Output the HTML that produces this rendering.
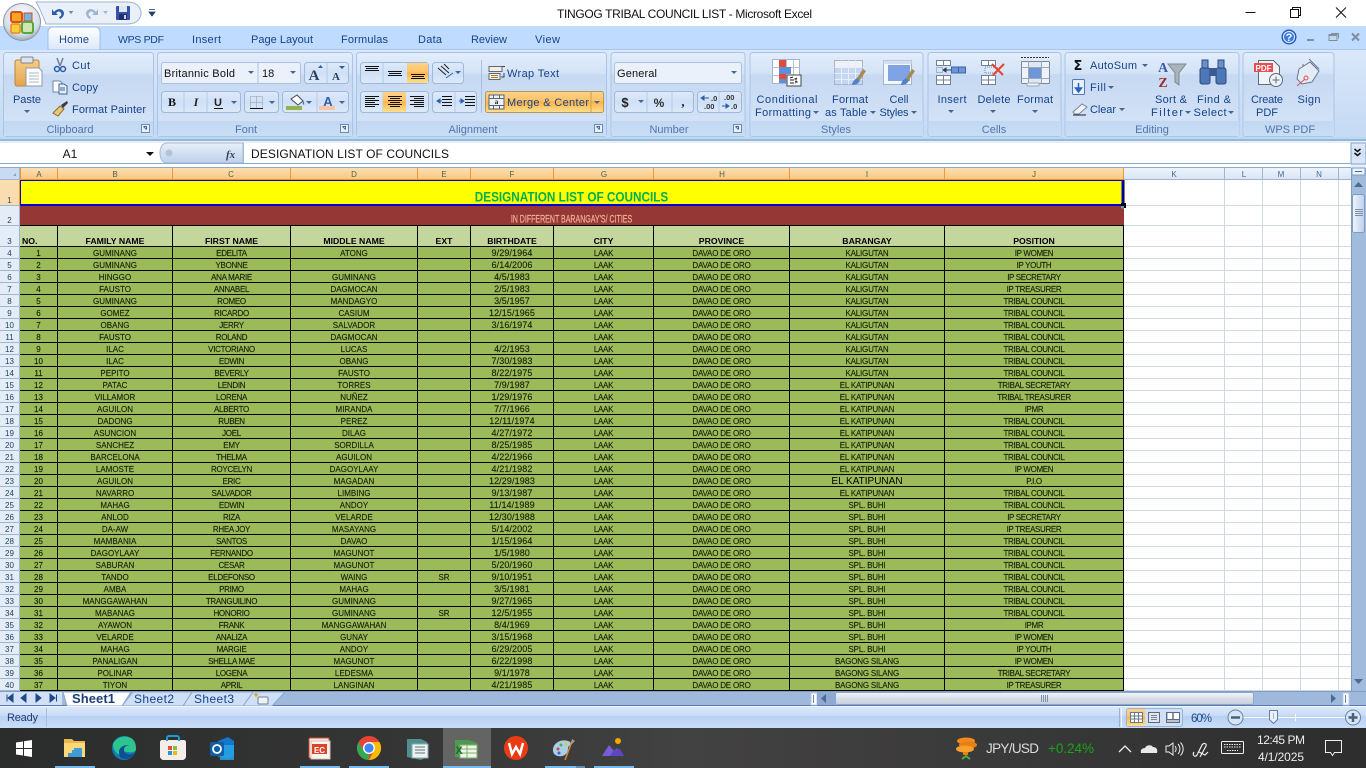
<!DOCTYPE html>
<html><head><meta charset="utf-8"><title>TINGOG TRIBAL COUNCIL LIST - Microsoft Excel</title>
<style>
html,body{margin:0;padding:0;width:1366px;height:768px;overflow:hidden;background:#fff;font-family:"Liberation Sans",sans-serif}
#sheet{position:absolute;left:0;top:180px;width:1124px;height:511px;overflow:hidden}
table{border-collapse:separate;border-spacing:0;table-layout:fixed;width:1124px}
td,th{box-sizing:border-box;padding:2px 0 0;overflow:hidden;white-space:nowrap;text-align:center;font-size:8px;line-height:9px;font-weight:normal}
td{background:#9bbb59;color:#18220a;-webkit-text-stroke:.15px #18220a;border-right:1px solid #000;border-bottom:1px solid #000}
th{background:#e4ecf7;color:#24415f;border-right:1px solid #9eb6ce;border-bottom:1px solid #9eb6ce}
tr{height:12px}
.h td{background:#c3d69b;color:#000;-webkit-text-stroke:0;font-weight:bold;font-size:8.7px;vertical-align:bottom;line-height:9px}
.h th{vertical-align:bottom;line-height:9px}
.d td:nth-child(4){letter-spacing:-.3px}
.d td:nth-child(7){font-size:9px;letter-spacing:.1px}
.d td:nth-child(8){letter-spacing:-.3px}
.d td:nth-child(9){letter-spacing:-.2px}
.d td:nth-child(10){letter-spacing:-.2px}
.d td:nth-child(11){letter-spacing:-.35px}
#right{position:absolute;left:1124px;top:180px;width:227px;height:511px;background:#fff;overflow:hidden;
background-image:linear-gradient(#d0d7e5,#d0d7e5),linear-gradient(#d0d7e5,#d0d7e5),linear-gradient(#d0d7e5,#d0d7e5),repeating-linear-gradient(to bottom,transparent 0,transparent 11px,#d0d7e5 11px,#d0d7e5 12px);
background-size:100% 1px,100% 1px,100% 1px,100% 444px;background-position:0 25px,0 45px,0 66px,0 67px;background-repeat:no-repeat}
#right i{position:absolute;top:0;width:1px;height:511px;background:#d0d7e5}
svg{position:absolute;left:0;top:0}
svg text{font-family:"Liberation Sans",sans-serif;font-size:11px;fill:#15428b}
.g{fill:#4f76ad;text-anchor:middle}
.m{text-anchor:middle}
.k{fill:#111}
.c{font-size:8px;text-anchor:middle;fill:#4d5f4a}
</style></head><body>
<div id="right"><i style="left:100px"></i><i style="left:138px"></i><i style="left:176px"></i><i style="left:214px"></i></div>
<div id="sheet"><table>
<colgroup><col style="width:20px"><col style="width:38px"><col style="width:115px"><col style="width:118px"><col style="width:127px"><col style="width:53px"><col style="width:83px"><col style="width:100px"><col style="width:136px"><col style="width:155px"><col style="width:179px"></colgroup>
<tr style="height:26px"><th style="background:#f9dcb0;border-right-color:#f29536;vertical-align:bottom;color:#3b4a55;line-height:9px">1</th><td colspan="10" style="background:#ff0;border:0"></td></tr>
<tr style="height:20px"><th style="vertical-align:bottom;line-height:9px">2</th><td colspan="10" style="background:#953735;border-right:0"></td></tr>
<tr class="h" style="height:21px"><th>3</th><td style="text-align:left;padding-left:2px">NO.</td><td>FAMILY NAME</td><td>FIRST NAME</td><td>MIDDLE NAME</td><td>EXT</td><td>BIRTHDATE</td><td>CITY</td><td>PROVINCE</td><td>BARANGAY</td><td>POSITION</td></tr>
<tr class="d"><th>4</th><td>1</td><td>GUMINANG</td><td>EDELITA</td><td>ATONG</td><td></td><td>9/29/1964</td><td>LAAK</td><td>DAVAO DE ORO</td><td>KALIGUTAN</td><td>IP WOMEN</td></tr>
<tr class="d"><th>5</th><td>2</td><td>GUMINANG</td><td>YBONNE</td><td></td><td></td><td>6/14/2006</td><td>LAAK</td><td>DAVAO DE ORO</td><td>KALIGUTAN</td><td>IP YOUTH</td></tr>
<tr class="d"><th>6</th><td>3</td><td>HINGGO</td><td>ANA MARIE</td><td>GUMINANG</td><td></td><td>4/5/1983</td><td>LAAK</td><td>DAVAO DE ORO</td><td>KALIGUTAN</td><td>IP SECRETARY</td></tr>
<tr class="d"><th>7</th><td>4</td><td>FAUSTO</td><td>ANNABEL</td><td>DAGMOCAN</td><td></td><td>2/5/1983</td><td>LAAK</td><td>DAVAO DE ORO</td><td>KALIGUTAN</td><td>IP TREASURER</td></tr>
<tr class="d"><th>8</th><td>5</td><td>GUMINANG</td><td>ROMEO</td><td>MANDAGYO</td><td></td><td>3/5/1957</td><td>LAAK</td><td>DAVAO DE ORO</td><td>KALIGUTAN</td><td>TRIBAL COUNCIL</td></tr>
<tr class="d"><th>9</th><td>6</td><td>GOMEZ</td><td>RICARDO</td><td>CASIUM</td><td></td><td>12/15/1965</td><td>LAAK</td><td>DAVAO DE ORO</td><td>KALIGUTAN</td><td>TRIBAL COUNCIL</td></tr>
<tr class="d"><th>10</th><td>7</td><td>OBANG</td><td>JERRY</td><td>SALVADOR</td><td></td><td>3/16/1974</td><td>LAAK</td><td>DAVAO DE ORO</td><td>KALIGUTAN</td><td>TRIBAL COUNCIL</td></tr>
<tr class="d"><th>11</th><td>8</td><td>FAUSTO</td><td>ROLAND</td><td>DAGMOCAN</td><td></td><td></td><td>LAAK</td><td>DAVAO DE ORO</td><td>KALIGUTAN</td><td>TRIBAL COUNCIL</td></tr>
<tr class="d"><th>12</th><td>9</td><td>ILAC</td><td>VICTORIANO</td><td>LUCAS</td><td></td><td>4/2/1953</td><td>LAAK</td><td>DAVAO DE ORO</td><td>KALIGUTAN</td><td>TRIBAL COUNCIL</td></tr>
<tr class="d"><th>13</th><td>10</td><td>ILAC</td><td>EDWIN</td><td>OBANG</td><td></td><td>7/30/1983</td><td>LAAK</td><td>DAVAO DE ORO</td><td>KALIGUTAN</td><td>TRIBAL COUNCIL</td></tr>
<tr class="d"><th>14</th><td>11</td><td>PEPITO</td><td>BEVERLY</td><td>FAUSTO</td><td></td><td>8/22/1975</td><td>LAAK</td><td>DAVAO DE ORO</td><td>KALIGUTAN</td><td>TRIBAL COUNCIL</td></tr>
<tr class="d"><th>15</th><td>12</td><td>PATAC</td><td>LENDIN</td><td>TORRES</td><td></td><td>7/9/1987</td><td>LAAK</td><td>DAVAO DE ORO</td><td>EL KATIPUNAN</td><td>TRIBAL SECRETARY</td></tr>
<tr class="d"><th>16</th><td>13</td><td>VILLAMOR</td><td>LORENA</td><td>NUÑEZ</td><td></td><td>1/29/1976</td><td>LAAK</td><td>DAVAO DE ORO</td><td>EL KATIPUNAN</td><td>TRIBAL TREASURER</td></tr>
<tr class="d"><th>17</th><td>14</td><td>AGUILON</td><td>ALBERTO</td><td>MIRANDA</td><td></td><td>7/7/1966</td><td>LAAK</td><td>DAVAO DE ORO</td><td>EL KATIPUNAN</td><td>IPMR</td></tr>
<tr class="d"><th>18</th><td>15</td><td>DADONG</td><td>RUBEN</td><td>PEREZ</td><td></td><td>12/11/1974</td><td>LAAK</td><td>DAVAO DE ORO</td><td>EL KATIPUNAN</td><td>TRIBAL COUNCIL</td></tr>
<tr class="d"><th>19</th><td>16</td><td>ASUNCION</td><td>JOEL</td><td>DILAG</td><td></td><td>4/27/1972</td><td>LAAK</td><td>DAVAO DE ORO</td><td>EL KATIPUNAN</td><td>TRIBAL COUNCIL</td></tr>
<tr class="d"><th>20</th><td>17</td><td>SANCHEZ</td><td>EMY</td><td>SORDILLA</td><td></td><td>8/25/1985</td><td>LAAK</td><td>DAVAO DE ORO</td><td>EL KATIPUNAN</td><td>TRIBAL COUNCIL</td></tr>
<tr class="d"><th>21</th><td>18</td><td>BARCELONA</td><td>THELMA</td><td>AGUILON</td><td></td><td>4/22/1966</td><td>LAAK</td><td>DAVAO DE ORO</td><td>EL KATIPUNAN</td><td>TRIBAL COUNCIL</td></tr>
<tr class="d"><th>22</th><td>19</td><td>LAMOSTE</td><td>ROYCELYN</td><td>DAGOYLAAY</td><td></td><td>4/21/1982</td><td>LAAK</td><td>DAVAO DE ORO</td><td>EL KATIPUNAN</td><td>IP WOMEN</td></tr>
<tr class="d"><th>23</th><td>20</td><td>AGUILON</td><td>ERIC</td><td>MAGADAN</td><td></td><td>12/29/1983</td><td>LAAK</td><td>DAVAO DE ORO</td><td style="font-size:10px;color:#000;-webkit-text-stroke:0;letter-spacing:0">EL KATIPUNAN</td><td>P.I.O</td></tr>
<tr class="d"><th>24</th><td>21</td><td>NAVARRO</td><td>SALVADOR</td><td>LIMBING</td><td></td><td>9/13/1987</td><td>LAAK</td><td>DAVAO DE ORO</td><td>EL KATIPUNAN</td><td>TRIBAL COUNCIL</td></tr>
<tr class="d"><th>25</th><td>22</td><td>MAHAG</td><td>EDWIN</td><td>ANDOY</td><td></td><td>11/14/1989</td><td>LAAK</td><td>DAVAO DE ORO</td><td>SPL. BUHI</td><td>TRIBAL COUNCIL</td></tr>
<tr class="d"><th>26</th><td>23</td><td>ANLOD</td><td>RIZA</td><td>VELARDE</td><td></td><td>12/30/1988</td><td>LAAK</td><td>DAVAO DE ORO</td><td>SPL. BUHI</td><td>IP SECRETARY</td></tr>
<tr class="d"><th>27</th><td>24</td><td>DA-AW</td><td>RHEA JOY</td><td>MASAYANG</td><td></td><td>5/14/2002</td><td>LAAK</td><td>DAVAO DE ORO</td><td>SPL. BUHI</td><td>IP TREASURER</td></tr>
<tr class="d"><th>28</th><td>25</td><td>MAMBANIA</td><td>SANTOS</td><td>DAVAO</td><td></td><td>1/15/1964</td><td>LAAK</td><td>DAVAO DE ORO</td><td>SPL. BUHI</td><td>TRIBAL COUNCIL</td></tr>
<tr class="d"><th>29</th><td>26</td><td>DAGOYLAAY</td><td>FERNANDO</td><td>MAGUNOT</td><td></td><td>1/5/1980</td><td>LAAK</td><td>DAVAO DE ORO</td><td>SPL. BUHI</td><td>TRIBAL COUNCIL</td></tr>
<tr class="d"><th>30</th><td>27</td><td>SABURAN</td><td>CESAR</td><td>MAGUNOT</td><td></td><td>5/20/1960</td><td>LAAK</td><td>DAVAO DE ORO</td><td>SPL. BUHI</td><td>TRIBAL COUNCIL</td></tr>
<tr class="d"><th>31</th><td>28</td><td>TANDO</td><td>ELDEFONSO</td><td>WAING</td><td>SR</td><td>9/10/1951</td><td>LAAK</td><td>DAVAO DE ORO</td><td>SPL. BUHI</td><td>TRIBAL COUNCIL</td></tr>
<tr class="d"><th>32</th><td>29</td><td>AMBA</td><td>PRIMO</td><td>MAHAG</td><td></td><td>3/5/1981</td><td>LAAK</td><td>DAVAO DE ORO</td><td>SPL. BUHI</td><td>TRIBAL COUNCIL</td></tr>
<tr class="d"><th>33</th><td>30</td><td>MANGGAWAHAN</td><td>TRANGUILINO</td><td>GUMINANG</td><td></td><td>9/27/1965</td><td>LAAK</td><td>DAVAO DE ORO</td><td>SPL. BUHI</td><td>TRIBAL COUNCIL</td></tr>
<tr class="d"><th>34</th><td>31</td><td>MABANAG</td><td>HONORIO</td><td>GUMINANG</td><td>SR</td><td>12/5/1955</td><td>LAAK</td><td>DAVAO DE ORO</td><td>SPL. BUHI</td><td>TRIBAL COUNCIL</td></tr>
<tr class="d"><th>35</th><td>32</td><td>AYAWON</td><td>FRANK</td><td>MANGGAWAHAN</td><td></td><td>8/4/1969</td><td>LAAK</td><td>DAVAO DE ORO</td><td>SPL. BUHI</td><td>IPMR</td></tr>
<tr class="d"><th>36</th><td>33</td><td>VELARDE</td><td>ANALIZA</td><td>GUNAY</td><td></td><td>3/15/1968</td><td>LAAK</td><td>DAVAO DE ORO</td><td>SPL. BUHI</td><td>IP WOMEN</td></tr>
<tr class="d"><th>37</th><td>34</td><td>MAHAG</td><td>MARGIE</td><td>ANDOY</td><td></td><td>6/29/2005</td><td>LAAK</td><td>DAVAO DE ORO</td><td>SPL. BUHI</td><td>IP YOUTH</td></tr>
<tr class="d"><th>38</th><td>35</td><td>PANALIGAN</td><td>SHELLA MAE</td><td>MAGUNOT</td><td></td><td>6/22/1998</td><td>LAAK</td><td>DAVAO DE ORO</td><td>BAGONG SILANG</td><td>IP WOMEN</td></tr>
<tr class="d"><th>39</th><td>36</td><td>POLINAR</td><td>LOGENA</td><td>LEDESMA</td><td></td><td>9/1/1978</td><td>LAAK</td><td>DAVAO DE ORO</td><td>BAGONG SILANG</td><td>TRIBAL SECRETARY</td></tr>
<tr class="d"><th>40</th><td>37</td><td>TIYON</td><td>APRIL</td><td>LANGINAN</td><td></td><td>4/21/1985</td><td>LAAK</td><td>DAVAO DE ORO</td><td>BAGONG SILANG</td><td>IP TREASURER</td></tr>
</table></div>

<svg width="1366" height="768" viewBox="0 0 1366 768">
<defs>
<linearGradient id="rb" x1="0" y1="0" x2="0" y2="1"><stop offset="0" stop-color="#d9e7f9"/><stop offset="1" stop-color="#c4d9f3"/></linearGradient>
<linearGradient id="gp" x1="0" y1="0" x2="0" y2="1"><stop offset="0" stop-color="#e2edfb"/><stop offset=".25" stop-color="#d3e3f7"/><stop offset=".27" stop-color="#c6d9f2"/><stop offset="1" stop-color="#d6e5f8"/></linearGradient>
<linearGradient id="lb" x1="0" y1="0" x2="0" y2="1"><stop offset="0" stop-color="#c2d8f2"/><stop offset="1" stop-color="#c9ddf5"/></linearGradient>
<linearGradient id="bt" x1="0" y1="0" x2="0" y2="1"><stop offset="0" stop-color="#dfeafa"/><stop offset=".5" stop-color="#cfe0f6"/><stop offset="1" stop-color="#dce9fa"/></linearGradient>
<linearGradient id="or" x1="0" y1="0" x2="0" y2="1"><stop offset="0" stop-color="#fbd38a"/><stop offset=".45" stop-color="#ffc266"/><stop offset=".5" stop-color="#ffb347"/><stop offset="1" stop-color="#ffe08f"/></linearGradient>
<linearGradient id="ch" x1="0" y1="0" x2="0" y2="1"><stop offset="0" stop-color="#fbdfb0"/><stop offset="1" stop-color="#f8c67f"/></linearGradient>
<linearGradient id="cn" x1="0" y1="0" x2="0" y2="1"><stop offset="0" stop-color="#edf3fc"/><stop offset="1" stop-color="#d8e4f4"/></linearGradient>
<linearGradient id="tb" x1="0" y1="0" x2="0" y2="1"><stop offset="0" stop-color="#fff"/><stop offset="1" stop-color="#dbe8f9"/></linearGradient>
<linearGradient id="st" x1="0" y1="0" x2="0" y2="1"><stop offset="0" stop-color="#dbe8fa"/><stop offset=".4" stop-color="#c9dcf7"/><stop offset=".45" stop-color="#b8d1f3"/><stop offset="1" stop-color="#c9ddf8"/></linearGradient>
<linearGradient id="sc" x1="0" y1="0" x2="0" y2="1"><stop offset="0" stop-color="#f4f6f9"/><stop offset=".5" stop-color="#d8dfe9"/><stop offset="1" stop-color="#c5cfdd"/></linearGradient>
<linearGradient id="sv" x1="0" y1="0" x2="1" y2="0"><stop offset="0" stop-color="#f0f5fc"/><stop offset="1" stop-color="#bcd0ea"/></linearGradient>
<linearGradient id="fx" x1="0" y1="0" x2="0" y2="1"><stop offset="0" stop-color="#e7effa"/><stop offset="1" stop-color="#bdd1ec"/></linearGradient>
<linearGradient id="tk" x1="0" y1="0" x2="1" y2="0"><stop offset="0" stop-color="#2b2c2c"/><stop offset=".3" stop-color="#353535"/><stop offset=".5" stop-color="#434242"/><stop offset=".72" stop-color="#3b3a3a"/><stop offset="1" stop-color="#2d2d2d"/></linearGradient>
<radialGradient id="ob" cx=".5" cy=".35" r=".7"><stop offset="0" stop-color="#fff"/><stop offset=".7" stop-color="#d6dde8"/><stop offset="1" stop-color="#8d9aab"/></radialGradient>
<linearGradient id="clip" x1="0" y1="0" x2="0" y2="1"><stop offset="0" stop-color="#f8cd85"/><stop offset="1" stop-color="#e3a44e"/></linearGradient>
<g id="dl"><rect x="0" y="0" width="8" height="8" fill="#e8f0fa" stroke="#6e8cb3"/><path d="M2 2h3v3M5 5l-3-3" stroke="#4a6a96" fill="none"/></g>
<path id="ar" d="M0 0h6l-3 3z" fill="#45678f"/>
</defs>

<!-- title bar -->
<rect x="0" y="0" width="1366" height="26" fill="#fff"/>
<text x="557" y="18" class="k" textLength="255" style="font-size:12px">TINGOG TRIBAL COUNCIL LIST - Microsoft Excel</text>
<path d="M1245.500 12.500h10" stroke="#111" fill="none"/>
<path d="M1290.500 9.500h8v8h-8zM1292.500 9.500v-2h8v8h-2" stroke="#111" fill="none"/>
<path d="M1336 7.500l10 10M1346 7.500l-10 10" stroke="#111" fill="none"/>

<!-- tabs band -->
<rect x="0" y="26" width="1366" height="25" fill="#bfdbff"/>
<!-- QAT -->
<path d="M36 2h92c8 0 13 5 13 11s-5 11-13 11H46c-3-8-6-16-10-22z" fill="#e9f0f9" stroke="#9fb3cc"/>
<path d="M54 12c3-4 9-4 10 1 0 3-2 5-4 6l-1-2c2-1 3-2 2-4-1-2-3-2-5 0l2 2h-6v-6z" fill="#2a5ea8"/>
<path d="M71 11l-2.500 0 2.500 3 2.500-3z" fill="#6f8bb0"/>
<path d="M96 12c-3-4-9-4-10 1 0 3 2 5 4 6l1-2c-2-1-3-2-2-4 1-2 3-2 5 0l-2 2h6v-6z" fill="#9db5cf"/>
<path d="M103 11h5l-2.500 3z" fill="#a5b6cb"/>
<rect x="116" y="6" width="14" height="14" rx="1" fill="#3a50a8"/><rect x="119" y="6" width="8" height="6" fill="#dfe7f5"/><rect x="119" y="14" width="8" height="6" fill="#20306e"/><rect x="124" y="15" width="2" height="4" fill="#cdd6e8"/>
<path d="M149 9.500h6M149 12h6l-3 4z" fill="#1e3c6e" stroke="#1e3c6e" stroke-width=".8"/>
<!-- office button -->
<circle cx="22" cy="22" r="18.500" fill="url(#ob)" stroke="#8b97a6"/>
<rect x="11" y="12" width="11" height="10" rx="2" fill="#f5a623" stroke="#d8501c" stroke-width="2"/>
<rect x="24" y="13" width="8" height="8" fill="#7cb3dd" stroke="#cf4a20"/>
<rect x="11" y="24" width="9" height="9" rx="1.500" fill="#f8cf3a" stroke="#e98b1f" stroke-width="1.500"/>
<rect x="22" y="22" width="11" height="11" rx="2" fill="#cfe8b0" stroke="#59a83f" stroke-width="2"/>
<!-- Home tab -->
<path d="M48 50V32c0-3 2-5 5-5h42c3 0 5 2 5 5v18z" fill="url(#tb)" stroke="#9dbde6"/>
<text x="59" y="43" textLength="30">Home</text>
<text x="118" y="43" textLength="46" style="font-size:10.500px">WPS PDF</text>
<text x="192" y="43" textLength="29">Insert</text>
<text x="251" y="43" textLength="62">Page Layout</text>
<text x="341" y="43" textLength="47">Formulas</text>
<text x="418" y="43" textLength="24">Data</text>
<text x="471" y="43" textLength="36">Review</text>
<text x="535" y="43" textLength="25">View</text>
<!-- doc buttons -->
<circle cx="1289" cy="37" r="7" fill="#3b7ce0" stroke="#1d4fa8"/><circle cx="1289" cy="37" r="5.500" fill="none" stroke="#dfeafc"/><text x="1289" y="41" class="m" style="fill:#fff;font-weight:bold;font-size:11px">?</text>
<rect x="1307" y="39" width="7" height="2" fill="#7d8ea3"/>
<path d="M1329 34.500h8v6h-8z" fill="#c9d6e8" stroke="#7d8ea3"/><path d="M1331 33.500h7.500v5" stroke="#7d8ea3" fill="none"/><rect x="1329" y="34" width="8" height="2" fill="#7d8ea3"/>
<path d="M1352 33.500l7 7M1359 33.500l-7 7" stroke="#7d8ea3" stroke-width="2"/>

<!-- ribbon -->
<rect x="0" y="50" width="1366" height="90" fill="url(#rb)"/>
<path d="M100 49.500H1366" stroke="#a8c6ec"/>
<rect x="0" y="137" width="1366" height="2" fill="#b6dcef"/>
<rect x="0" y="139" width="1366" height="2" fill="#9ab6d8"/>
<!-- groups -->
<g stroke="#a9c4e6" fill="url(#gp)">
<rect x="3.500" y="52.500" width="150" height="84" rx="3"/>
<rect x="157.500" y="52.500" width="195" height="84" rx="3"/>
<rect x="356.500" y="52.500" width="250" height="84" rx="3"/>
<rect x="611" y="52.500" width="134" height="84" rx="3"/>
<rect x="750" y="52.500" width="173" height="84" rx="3"/>
<rect x="928" y="52.500" width="133" height="84" rx="3"/>
<rect x="1065" y="52.500" width="174" height="84" rx="3"/>
<rect x="1243" y="52.500" width="91" height="84" rx="3"/>
</g>
<g fill="url(#lb)">
<rect x="4" y="121" width="149" height="15"/><rect x="158" y="121" width="194" height="15"/><rect x="357" y="121" width="249" height="15"/><rect x="612" y="121" width="133" height="15"/><rect x="751" y="121" width="172" height="15"/><rect x="929" y="121" width="132" height="15"/><rect x="1066" y="121" width="173" height="15"/><rect x="1244" y="121" width="90" height="15"/>
</g>
<text x="70" y="133" class="g">Clipboard</text><text x="246" y="133" class="g">Font</text><text x="473" y="133" class="g">Alignment</text><text x="669" y="133" class="g">Number</text><text x="836" y="133" class="g">Styles</text><text x="994" y="133" class="g">Cells</text><text x="1152" y="133" class="g">Editing</text><text x="1290" y="133" class="g">WPS PDF</text>
<use href="#dl" x="141.500" y="124.500"/><use href="#dl" x="340.500" y="124.500"/><use href="#dl" x="594.500" y="124.500"/><use href="#dl" x="733.500" y="124.500"/>

<!-- clipboard -->
<rect x="15" y="60" width="24" height="26" rx="2" fill="url(#clip)" stroke="#b8843e"/>
<rect x="21" y="57" width="12" height="6" rx="1" fill="#dfe3e8" stroke="#7c8797"/>
<path d="M26 68h13l3 3v15H26z" fill="#fff" stroke="#8a99ad"/><path d="M29 73h10M29 76h10M29 79h10M29 82h10" stroke="#aab6c6"/>
<text x="27" y="103" class="m" textLength="28">Paste</text><use href="#ar" x="24" y="110"/>
<path d="M57 58l3 8M63 58l-3 8" stroke="#6f7f95" stroke-width="1.500"/><circle cx="57" cy="69" r="2.500" fill="none" stroke="#2a5ea8" stroke-width="1.500"/><circle cx="63" cy="69" r="2.500" fill="none" stroke="#2a5ea8" stroke-width="1.500"/>
<text x="72" y="69" textLength="18">Cut</text>
<path d="M53 81h7l2 2v9h-9z" fill="#fff" stroke="#6f86a8"/><path d="M59 84h5l3 2v8h-8z" fill="#e6eef9" stroke="#3a6199"/><path d="M60 88h5M60 90h5" stroke="#3a6199"/>
<text x="72" y="91" textLength="26">Copy</text>
<path d="M53 113l7-7 4 3-6 7z" fill="#e8c77a" stroke="#8a6b2e"/><path d="M61 105l6-4 1 2-5 5z" fill="#39393f"/>
<text x="72" y="113" textLength="74">Format Painter</text>

<!-- font -->
<rect x="161.500" y="62.500" width="139" height="21" rx="2" fill="#eaf1fb" stroke="#abc3e2"/><path d="M258 63v20" stroke="#abc3e2"/>
<text x="164" y="77" class="k" textLength="71">Britannic Bold</text><text x="262" y="77" class="k">18</text>
<use href="#ar" x="248" y="71"/><use href="#ar" x="290" y="71"/>
<rect x="304.500" y="62.500" width="44" height="21" rx="3" fill="url(#bt)" stroke="#9db9dc"/><path d="M327 63v20" stroke="#b5cbe6"/>
<text x="314" y="80" class="m" style="font:bold 15px 'Liberation Serif',serif;fill:#2a3f5a">A</text><text x="336" y="80" class="m" style="font:bold 11px 'Liberation Serif',serif;fill:#2a3f5a">A</text>
<path d="M318 68l2.500-3 2.500 3z M339 66h6l-3 3z" fill="#2a5ea8"/>
<rect x="161.500" y="91.500" width="79" height="21" rx="3" fill="url(#bt)" stroke="#9db9dc"/><path d="M184 92v20M207 92v20" stroke="#b5cbe6"/>
<text x="172" y="106" class="m" style="font:bold 12px 'Liberation Serif',serif;fill:#111">B</text><text x="196" y="106" class="m" style="font:italic bold 12px 'Liberation Serif',serif;fill:#222">I</text><text x="218" y="106" class="m" style="font:bold 11px 'Liberation Sans';fill:#222">U</text><path d="M214 108.500h9" stroke="#111"/><use href="#ar" x="231" y="101"/>
<rect x="244.500" y="91.500" width="34" height="21" rx="3" fill="url(#bt)" stroke="#9db9dc"/><path d="M250.500 96.500h12v12h-12zM256.500 96.500v12M250.500 102.500h12" stroke="#8d99a8" stroke-dasharray="1 1" fill="none"/><path d="M250 108.500h13" stroke="#111"/><use href="#ar" x="269" y="101"/>
<rect x="282.500" y="91.500" width="66" height="21" rx="3" fill="url(#bt)" stroke="#9db9dc"/><path d="M317 92v20" stroke="#b5cbe6"/>
<path d="M291 99l6-4 6 6-5 4z" fill="#fff" stroke="#3f4a5a"/><path d="M303 101c2 2 1 4 1 4s-2-1-1-4z" fill="#3d6fb8"/><rect x="286" y="106" width="16" height="4" fill="#92b44f"/><use href="#ar" x="306" y="101"/>
<text x="328" y="106" class="m" style="font:bold 13px 'Liberation Sans';fill:#3460a8">A</text><rect x="319" y="106" width="16" height="4" fill="#f8c6a4"/><use href="#ar" x="339" y="101"/>

<!-- alignment -->
<rect x="360.500" y="62.500" width="68" height="21" rx="3" fill="url(#bt)" stroke="#9db9dc"/><path d="M383 63v20" stroke="#b5cbe6"/>
<rect x="407" y="63" width="21" height="20" fill="url(#or)"/>
<path d="M365 66.500h14M366 68.500h12M365 70.500h14M388 71.500h14M389 73.500h12M388 75.500h14M411 74.500h14M412 76.500h12M411 78.500h14" stroke="#111" fill="none"/>
<rect x="432.500" y="62.500" width="31" height="21" rx="3" fill="url(#bt)" stroke="#9db9dc"/><path d="M438 68l8 7M441 66l8 7M444 64l5 5" stroke="#222" fill="none"/><path d="M446 78l7-5" stroke="#3460a8"/><use href="#ar" x="455" y="71"/>
<rect x="360.500" y="91.500" width="68" height="21" rx="3" fill="url(#bt)" stroke="#9db9dc"/><path d="M383 92v20" stroke="#b5cbe6"/>
<rect x="383" y="92" width="23" height="20" fill="url(#or)"/>
<path d="M365 96.500h14M365 98.500h10M365 100.500h14M365 102.500h10M365 104.500h14M365 106.500h10M388 96.500h14M390 98.500h10M388 100.500h14M390 102.500h10M388 104.500h14M390 106.500h10M410 96.500h14M414 98.500h10M410 100.500h14M414 102.500h10M410 104.500h14M414 106.500h10" stroke="#111" fill="none"/>
<rect x="432.500" y="91.500" width="44" height="21" rx="3" fill="url(#bt)" stroke="#9db9dc"/><path d="M455 92v20" stroke="#b5cbe6"/>
<path d="M442 96.500h10M442 99.500h10M442 102.500h10M442 105.500h10M465 96.500h10M465 99.500h10M465 102.500h10M465 105.500h10" stroke="#111" fill="none"/><path d="M437 101h5M437 101l3-2v4z M459 101h5M464 101l-3-2v4z" stroke="#2a5ea8" fill="#2a5ea8"/>
<path d="M481.500 60v53" stroke="#a9c0dc"/>
<path d="M489 66.500h13v5h-13zM489 73.500h11v6h-11z" fill="#f6efe0" stroke="#5f6a78"/><path d="M491 75.500h7M491 77.500h7" stroke="#b8752e"/><path d="M502 66.500h3M504 73v4h-3" stroke="#3a4657" fill="none"/>
<text x="507" y="77" textLength="52">Wrap Text</text>
<rect x="485.500" y="91.500" width="118" height="21" rx="2" fill="url(#or)" stroke="#b49a5a"/><path d="M591 92v20" stroke="#c9a04e"/>
<rect x="489" y="95" width="15" height="14" fill="#eef2f7" stroke="#566478"/><path d="M489 98.500h15M489 105.500h15M493.500 95v3M499.500 95v3M493.500 106v3M499.500 106v3" stroke="#566478"/>
<text x="496.500" y="104" class="m" style="font:bold 7px 'Liberation Serif',serif;fill:#111">a</text>
<text x="507" y="106" textLength="82">Merge &amp; Center</text><use href="#ar" x="594" y="101"/>

<!-- number -->
<rect x="614.500" y="62.500" width="127" height="21" rx="2" fill="#eaf1fb" stroke="#abc3e2"/>
<text x="617" y="77" class="k" textLength="40">General</text><use href="#ar" x="731" y="71"/>
<rect x="614.500" y="91.500" width="79" height="21" rx="3" fill="url(#bt)" stroke="#9db9dc"/><path d="M647 92v20M672 92v20" stroke="#b5cbe6"/>
<text x="625" y="107" class="m" style="font:bold 13px 'Liberation Sans';fill:#222">$</text><use href="#ar" x="638" y="100"/>
<text x="659" y="107" class="m" style="font:bold 12px 'Liberation Sans';fill:#333">%</text><text x="683" y="106" class="m" style="font:bold 13px 'Liberation Serif',serif;fill:#222">,</text>
<rect x="697.500" y="91.500" width="44" height="21" rx="3" fill="url(#bt)" stroke="#9db9dc"/><path d="M719 92v20" stroke="#b5cbe6"/>
<text x="711" y="101" style="font:bold 7.500px 'Liberation Sans';fill:#333">.0</text><text x="704" y="109" style="font:bold 7.500px 'Liberation Sans';fill:#333">.00</text><path d="M701 98h8M701 98l3-2v4z" stroke="#2a5ea8" fill="#2a5ea8"/>
<text x="724" y="100" style="font:bold 7.500px 'Liberation Sans';fill:#333">.00</text><text x="731" y="109" style="font:bold 7.500px 'Liberation Sans';fill:#333">.0</text><path d="M722 106h7M729 106l-3-2v4z" stroke="#2a5ea8" fill="#2a5ea8"/>

<!-- styles -->
<rect x="772.500" y="59.500" width="27" height="24" fill="#fff" stroke="#a7b4c6"/>
<path d="M772.500 67.500h27M772.500 75.500h27M779.500 59.500v24M786.500 59.500v24M793.500 59.500v24" stroke="#b5c1d0"/>
<rect x="779" y="60" width="7" height="7" fill="#e04b3a"/><rect x="779" y="67" width="12" height="7" fill="#5f8fdc"/><rect x="779" y="74" width="7" height="5" fill="#e04b3a"/><rect x="779" y="79" width="7" height="4" fill="#5f8fdc"/>
<rect x="787" y="75" width="14" height="11" fill="#fff" stroke="#444"/><path d="M790 78l3-1M790 80h4M790 83h4M797 78l-2 1 2 1M795 83l2-1-2-1" stroke="#222" fill="none"/>
<rect x="834.500" y="60.500" width="28" height="24" fill="#c4d6f2" stroke="#a7b4c6"/><rect x="835" y="61" width="27" height="6" fill="#eef2f8"/><path d="M834.500 67.500h28M834.500 73.500h28M834.500 79.500h28M841.500 60.500v24M848.500 60.500v24M855.500 60.500v24" stroke="#e8eef8"/>
<path d="M852 85c0-3 3-6 5-7l3 2c-1 3-3 5-8 5z" fill="#5781c5"/><path d="M857 78l6-9 3 2-6 9z" fill="#a88a56"/>
<rect x="883.500" y="60.500" width="28" height="24" fill="#f4f7fc" stroke="#a7b4c6"/><rect x="888" y="65" width="22" height="16" fill="#7fa3e5"/><rect x="883.500" y="60.500" width="28" height="3.500" fill="#d3dff0"/>
<path d="M901 85c0-3 3-6 5-7l3 2c-1 3-3 5-8 5z" fill="#5781c5"/><path d="M906 78l6-9 3 2-6 9z" fill="#a88a56"/>
<text x="787" y="103" class="m" textLength="61">Conditional</text><text x="783" y="116" class="m" textLength="56">Formatting</text><use href="#ar" x="813" y="111"/>
<text x="850" y="103" class="m" textLength="36">Format</text><text x="846" y="116" class="m" textLength="42">as Table</text><use href="#ar" x="870" y="111"/>
<text x="899" y="103" class="m" textLength="19">Cell</text><text x="894" y="116" class="m" textLength="29">Styles</text><use href="#ar" x="911" y="111"/>

<!-- cells -->
<path d="M936.500 60.500h14v5h-14zM943.500 60.500v5M936.500 75.500h14v9h-14zM943.500 75.500v9M936.500 80h14" fill="#fff" stroke="#72819a"/>
<rect x="951.500" y="67" width="14" height="6" fill="#6d96d8" stroke="#3e63a8"/><path d="M958.500 67v6" stroke="#3e63a8"/><path d="M943 70h8M943 70l3-2v4z" stroke="#2d3c55" fill="#2d3c55"/><rect x="936.500" y="67.500" width="6" height="5" fill="none" stroke="#72819a" stroke-dasharray="1 1"/>
<path d="M981.500 60.500h14v5h-14zM988.500 60.500v5M981.500 75.500h14v9h-14zM988.500 75.500v9M981.500 80h14" fill="#fff" stroke="#72819a"/>
<rect x="985" y="67" width="12" height="6" fill="#dde8f8" stroke="#6d86aa" stroke-dasharray="1 1"/><path d="M992 64l11 11M1004 64l-11 11" stroke="#e8432c" stroke-width="2"/>
<path d="M1021 57.500h28" stroke="#333" stroke-dasharray="2 1"/><rect x="1021.500" y="61.500" width="28" height="22" rx="1" fill="#eef3fa" stroke="#7b8899"/><rect x="1028" y="62" width="14" height="21" fill="#dfe7f2"/><rect x="1028" y="67" width="14" height="11" fill="#6d96d8"/><path d="M1021.500 67.500h28M1021.500 78.500h28M1028.500 61.500v22M1041.500 61.500v22" stroke="#9ba8b9" fill="none"/><rect x="1027" y="83" width="12" height="3" rx="1" fill="#eef3fa" stroke="#9ba8b9"/>
<text x="952" y="103" class="m" textLength="29">Insert</text><use href="#ar" x="948" y="110"/>
<text x="994" y="103" class="m" textLength="33">Delete</text><use href="#ar" x="990" y="110"/>
<text x="1035" y="103" class="m" textLength="36">Format</text><use href="#ar" x="1032" y="110"/>

<!-- editing -->
<text x="1078" y="70" class="m" style="font:bold 13px 'DejaVu Sans';fill:#111">Σ</text>
<text x="1090" y="69" textLength="47">AutoSum</text><use href="#ar" x="1142" y="64"/>
<rect x="1072.500" y="79.500" width="12" height="15" rx="1" fill="#e8f0fb" stroke="#5478b0"/><path d="M1078.500 83v8M1075.500 88l3 4 3-4z" stroke="#2a62c4" fill="#2a62c4" stroke-width="1.500"/>
<text x="1090" y="91" textLength="16">Fill</text><use href="#ar" x="1108" y="86"/>
<path d="M1073 112l9-8 5 3-8 7h-4z" fill="#eff2f6" stroke="#7a8696"/><path d="M1073 115h13" stroke="#222"/>
<text x="1090" y="113" textLength="26">Clear</text><use href="#ar" x="1119" y="108"/>
<text x="1163" y="72" class="m" style="font:bold 14px 'Liberation Serif',serif;fill:#3a5ca8">A</text><text x="1163" y="87" class="m" style="font:bold 14px 'Liberation Serif',serif;fill:#9c2c2c">Z</text>
<path d="M1168 64h18l-7 9v12l-4-3v-9z" fill="#aab2ba" stroke="#7f8a96"/>
<rect x="1200" y="68" width="10" height="16" rx="2" fill="#4d78b8" stroke="#2a4a80"/><rect x="1216" y="68" width="10" height="16" rx="2" fill="#4d78b8" stroke="#2a4a80"/><rect x="1202" y="60" width="6" height="8" fill="#6d90c8" stroke="#2a4a80"/><rect x="1218" y="60" width="6" height="8" fill="#6d90c8" stroke="#2a4a80"/><rect x="1210" y="68" width="6" height="8" fill="#3a5a90"/>
<text x="1171" y="103" class="m" textLength="32">Sort &amp;</text><text x="1167" y="116" class="m" textLength="32">Filter</text><use href="#ar" x="1185" y="111"/>
<text x="1214" y="103" class="m" textLength="34">Find &amp;</text><text x="1210" y="116" class="m" textLength="33">Select</text><use href="#ar" x="1228" y="111"/>

<!-- wps pdf -->
<path d="M1258.500 60.500h15l6 6v18h-21z" fill="#eef3fa" stroke="#5f6a78"/>
<rect x="1254" y="63" width="19" height="9" fill="#ec4c4c"/><text x="1263.500" y="71" class="m" style="fill:#fff;font:bold 8px 'Liberation Sans'">PDF</text>
<circle cx="1276" cy="80" r="6.500" fill="#eef3fa" stroke="#5f6a78"/><path d="M1272.500 80h7M1276 76.500v7" stroke="#5f6a78"/>
<path d="M1297 79l2-10 11-7 9 9-7 11-10 2z" fill="#e3ebf6" stroke="#6b7788"/><path d="M1304 65l-2 0M1309 59l10 10" stroke="#6b7788"/><path d="M1297 86l8-7" stroke="#e0524f"/><circle cx="1306" cy="78" r="2" fill="none" stroke="#e0524f"/>
<text x="1267" y="103" class="m" textLength="32">Create</text><text x="1267" y="116" class="m" textLength="22">PDF</text>
<text x="1309" y="103" class="m" textLength="23">Sign</text>

<!-- formula bar -->
<rect x="0" y="141" width="1366" height="27" fill="#e7effa"/>
<rect x="0" y="143" width="1351" height="20" fill="#fff"/>
<text x="70" y="158" class="m k" style="font-size:12px">A1</text>
<path d="M146 152h8l-4 4z" fill="#111"/>
<path d="M243 143h-76c-5 0-7 5-7 10s2 10 7 10h76z" fill="url(#fx)" stroke="#a6bad4"/>
<circle cx="169" cy="153" r="3.500" fill="#b9c3cf"/>
<text x="226" y="158" style="font:italic bold 11px 'Liberation Serif',serif;fill:#39424e">fx</text>
<text x="251" y="158" class="k" textLength="198" style="font-size:12px">DESIGNATION LIST OF COUNCILS</text>
<path d="M243.500 143v20" stroke="#a6bad4"/>
<path d="M0 163.500H1351" stroke="#8ea9c9"/>
<rect x="1351" y="143" width="15" height="21" fill="url(#bt)" stroke="#86a3c7"/>
<path d="M1354.500 149l3 2.500 3-2.500M1354.500 153l3 2.500 3-2.500" stroke="#111" fill="none" stroke-width="1.500"/>
<rect x="0" y="164" width="1351" height="3" fill="#fff"/>
<path d="M0 167.500H1351" stroke="#8da9cc"/>

<!-- column headers -->
<rect x="0" y="168" width="20" height="12" fill="#c9dbf3"/><path d="M19.500 168v12" stroke="#9eb6ce"/><path d="M16 176h-3l3-3z" fill="#87a2c6"/>
<rect x="20" y="168" width="1104" height="12" fill="url(#ch)"/>
<rect x="1124" y="168" width="227" height="12" fill="url(#cn)"/>
<path d="M20.500 168v12M57.500 168v12M172.500 168v12M290.500 168v12M417.500 168v12M470.500 168v12M553.500 168v12M653.500 168v12M789.500 168v12M944.500 168v12M1123.500 168v12" stroke="#f29536"/>
<path d="M0 179.500H20M1124 179.500H1351" stroke="#9eb6ce"/><path d="M20 179.500H1124" stroke="#f29536"/>
<path d="M1224.500 168v12M1262.500 168v12M1300.500 168v12M1338.500 168v12" stroke="#9eb6ce"/>
<text x="39" y="177" class="c">A</text><text x="115" y="177" class="c">B</text><text x="231" y="177" class="c">C</text><text x="354" y="177" class="c">D</text><text x="444" y="177" class="c">E</text><text x="512" y="177" class="c">F</text><text x="604" y="177" class="c">G</text><text x="722" y="177" class="c">H</text><text x="867" y="177" class="c">I</text><text x="1034" y="177" class="c">J</text>
<text x="1174" y="177" class="c" style="fill:#3f6a96">K</text><text x="1244" y="177" class="c" style="fill:#3f6a96">L</text><text x="1281" y="177" class="c" style="fill:#3f6a96">M</text><text x="1319" y="177" class="c" style="fill:#3f6a96">N</text>

<!-- merged titles -->
<text transform="translate(571.500,201.500) scale(.84,1)" class="m" style="font-size:14px;font-weight:bold;fill:#00b050">DESIGNATION LIST OF COUNCILS</text>
<text transform="translate(571.500,222.500) scale(.64,1)" class="m" style="font-size:11px;fill:#f0b096;stroke:#f0b096;stroke-width:.25px">IN DIFFERENT BARANGAY'S/ CITIES</text>

<!-- selection -->
<path d="M20.500 180.500H1123.500" stroke="#0000d8" fill="none"/><path d="M20 205H1124" stroke="#0000d8" stroke-width="2"/><path d="M20.500 180v25" stroke="#0000d8"/><path d="M1122.500 180v25" stroke="#0000d8" stroke-width="2"/><path d="M1124 180v23" stroke="#000" stroke-width="1"/>
<rect x="1121" y="203" width="5" height="5" fill="#000"/><rect x="1121" y="206" width="3" height="2.500" fill="#5aa0b4"/>

<!-- v scrollbar -->
<rect x="1351" y="168" width="15" height="523" fill="#a1bbdd"/>
<path d="M1351.500 168v523" stroke="#7f9dc4"/>
<rect x="1352" y="168" width="13" height="7" fill="#edf3fb" stroke="#7f9dc4"/><path d="M1355 171.500h7" stroke="#4a6a96"/>
<path d="M1354 187l4.500-5 4.500 5z" fill="#4d6a8f"/>
<rect x="1352.500" y="194.500" width="12" height="38" rx="2" fill="url(#sv)" stroke="#7f9dc4"/><path d="M1355 209.500h8M1355 211.500h8M1355 213.500h8M1355 215.500h8" stroke="#7f8fa5"/>
<path d="M1354 679h9l-4.500 5z" fill="#4d6a8f"/>

<!-- sheet tabs + h scrollbar -->
<rect x="0" y="691" width="1366" height="16" fill="#9fb9dc"/>
<path d="M0 691.500H1366" stroke="#7f9dc4"/>
<path d="M0 705.500H1366" stroke="#557aab"/>
<rect x="0" y="692" width="62" height="13" fill="#d2e1f6"/>
<path d="M7 694.500v7M13 694v8l-5-4zM26 694v8l-5-4zM36 694v8l5-4zM50 694v8l5-4zM56.500 694.500v7" stroke="#1e4a8a" fill="#1e4a8a"/>
<path d="M243 706l10-14h32l-13 14z" fill="#cfdff5" stroke="#8aa8ce"/>
<path d="M183 706l9-14h61l-10 14z" fill="#cfdff5" stroke="#8aa8ce"/>
<path d="M122 706l11-14h59l-9 14z" fill="#cfdff5" stroke="#8aa8ce"/>
<path d="M63 692h68l-9 14H67z" fill="#fff" stroke="#8aa8ce"/>
<text x="72" y="703" style="font-size:13px;font-weight:bold;fill:#1e3f75" textLength="43">Sheet1</text>
<text x="134" y="703" style="font-size:12px" textLength="40">Sheet2</text>
<text x="194" y="703" style="font-size:12px" textLength="40">Sheet3</text>
<rect x="258" y="697" width="10" height="7" rx="1" fill="#eef3fa" stroke="#6f7f95"/><path d="M256 692l1 2 2 .5-2 1-1 2-1-2-2-1 2-.5z" fill="#e8a020"/>
<rect x="811" y="693" width="6" height="12" fill="#fff" stroke="#b9cce6"/><path d="M813.500 695v8" stroke="#6f85a3"/>
<rect x="817" y="692" width="18" height="13" fill="#8eaad2"/><path d="M826 694v9l-5-4.500z" fill="#4d6a8f"/>
<rect x="835.500" y="692.500" width="418" height="12" rx="2" fill="url(#sc)" stroke="#8da8cb"/><path d="M1041.500 695v7M1043.500 695v7M1045.500 695v7M1047.500 695v7" stroke="#7f8fa5"/>
<path d="M1331 694v9l5-4.500z" fill="#4d6a8f"/>
<rect x="1343" y="693" width="6" height="12" fill="#fff" stroke="#b9cce6"/><path d="M1345.500 695v8" stroke="#6f85a3"/>

<!-- status bar -->
<rect x="0" y="707" width="1366" height="21" fill="url(#st)"/>
<path d="M0 706.500H1366" stroke="#eef5fd"/>
<text x="7" y="721" textLength="31" style="fill:#1e3f75;font-size:11px">Ready</text>
<path d="M46.500 708v19" stroke="#a8c0de"/><path d="M1119.500 708v19" stroke="#96b2d6"/><path d="M1121.500 708v19" stroke="#eef5fd"/>
<rect x="1126.500" y="708.500" width="56" height="18" rx="2" fill="#cfdff5" stroke="#96b2d6"/>
<rect x="1127" y="709" width="18" height="17" fill="url(#or)"/>
<rect x="1130.500" y="712.500" width="12" height="10" fill="#fff" stroke="#6d7988"/><path d="M1130.500 716h12M1130.500 719h12M1134.500 712.500v10M1138.500 712.500v10" stroke="#6d7988"/>
<rect x="1148.500" y="712.500" width="11" height="10" fill="#dfe5ee" stroke="#5f6b7a"/><path d="M1151 715.500h6M1151 717.500h6M1151 719.500h6" stroke="#7a8696"/>
<rect x="1166.500" y="712.500" width="13" height="10" fill="#b9c2cf" stroke="#5f6b7a"/><path d="M1173 712.500v7M1166.500 719.500h13" stroke="#5f6b7a"/><rect x="1168" y="713" width="4" height="6" fill="#fff"/><rect x="1174" y="713" width="5" height="6" fill="#fff"/>
<text x="1191" y="722" style="fill:#1e4a8a;font-size:11.500px" textLength="21">60%</text>
<path d="M1242 717.500H1346" stroke="#fff"/><path d="M1295.500 714v7" stroke="#fff"/>
<circle cx="1235.500" cy="717.500" r="7.500" fill="#d8e5f7" stroke="#64809f"/><path d="M1231 717.500h9" stroke="#4a6078" stroke-width="2.500"/>
<circle cx="1353" cy="717.500" r="7.500" fill="#d8e5f7" stroke="#64809f"/><path d="M1348.500 717.500h9M1353 713v9" stroke="#4a6078" stroke-width="2.500"/>
<path d="M1269.500 710.500h8v9l-4 4-4-4z" fill="#eef3fa" stroke="#64809f"/><path d="M1273.500 713v6" stroke="#9fb3cc"/>

<!-- taskbar -->
<rect x="0" y="728" width="1366" height="40" fill="url(#tk)"/>
<rect x="443" y="728" width="48" height="40" fill="#646464"/>
<path d="M16 742.500l7-1v6.500h-7zM24 741.300l8-1.300v8h-8zM16 749h7v6.500l-7-1zM24 749h8v8l-8-1.200z" fill="#fff"/>
<!-- explorer -->
<path d="M64 739h8l2 2h11v15H64z" fill="#e8b84a"/><path d="M64 743h21v14H64z" fill="#fbd87a"/><path d="M74 748h8v8h-3v-4h-5z M68 753h14v4H68z" fill="#3f9ad6"/><rect x="72" y="750" width="8" height="4" fill="#3f9ad6"/>
<!-- edge -->
<circle cx="124" cy="748" r="12" fill="#0d7bb8"/><path d="M113 744c3-7 12-9 18-6 4 2 5 7 5 11 0 3-4 4-8 3-4 0-6-2-5-5-3 2-5 5-3 8-4-1-7-6-7-11z" fill="#2cc58f"/><path d="M119 751c1-5 7-7 11-5-4-1-6 1-6 4 0 4 5 6 11 3-3 6-10 7-14 5-2-2-2-5-2-7z" fill="#0f4f91"/>
<!-- store -->
<path d="M162 740h22c1 0 2 1 2 2v15c0 1-2 3-3 3h-20c-1 0-3-2-3-3v-15c0-1 1-2 2-2z" fill="#f3eeea"/><path d="M167 741v-3c0-1 1-2 2-2h8c1 0 2 1 2 2v3" fill="none" stroke="#1f9ad6" stroke-width="2"/>
<rect x="168" y="746" width="4" height="4" fill="#e8502f"/><rect x="173" y="746" width="4" height="4" fill="#7cc242"/><rect x="168" y="751" width="4" height="4" fill="#1f9ad6"/><rect x="173" y="751" width="4" height="4" fill="#f6b21b"/>
<!-- outlook -->
<path d="M218 741l10-4 6 4v15l-6 3-10-2z" fill="#1577c9"/><path d="M220 745h14v15h-14z" fill="#28a8ea" opacity=".8"/><rect x="210" y="742" width="14" height="14" rx="2" fill="#0e5fa8"/><circle cx="217" cy="749" r="4" fill="none" stroke="#fff" stroke-width="1.800"/>
<!-- ppt-like -->
<rect x="309" y="738" width="20" height="20" rx="1" fill="#f3e6e0" stroke="#d04a2e"/><rect x="311" y="741" width="19" height="18" fill="#fbf3ee" stroke="#d6c3ba"/><rect x="312" y="744" width="15" height="10" fill="#d8452a"/><text x="319.500" y="753" class="m" style="fill:#fff;font:bold 8px 'Liberation Sans'">EC</text>
<!-- chrome -->
<circle cx="369" cy="748" r="12" fill="#ea4335"/><path d="M369 760a12 12 0 0 1-10.400-18L364 751l5 3z" fill="#34a853"/><path d="M369 760a12 12 0 0 0 10.400-18H369l5 9z" fill="#fbbc05"/><circle cx="369" cy="748" r="6" fill="#fff"/><circle cx="369" cy="748" r="4.600" fill="#4285f4"/>
<!-- publisher-like -->
<path d="M407 739h14l6 3v15l-6 3-14-3z" fill="#4f8f8f"/><rect x="412" y="744" width="16" height="14" fill="#eef3f2" stroke="#8aa"/><path d="M415 747h10M415 750h10M415 753h10" stroke="#577"/>
<!-- excel -->
<path d="M455 740h14l8 3v14l-8 2-14-2z" fill="#4f9a4f"/><rect x="460" y="745" width="17" height="13" fill="#eff6e9" stroke="#7bb26f"/><path d="M460 749h17M460 753h17M467 745v13" stroke="#7bb26f"/><text x="459" y="754" class="m" style="font:bold 11px 'Liberation Sans';fill:#1d6a2d">X</text>
<!-- wps -->
<circle cx="516" cy="748" r="12" fill="#ea3b13"/><path d="M509 743l3 11 4-7 4 7 3-11" fill="none" stroke="#fff" stroke-width="2.500"/>
<!-- paint -->
<path d="M553 749c1-7 9-10 15-8 3 1 4 3 1 5-2 2 0 5-3 8-4 4-14 3-13-5z" fill="#a9cfe8"/><circle cx="558" cy="749" r="1.500" fill="#d94040"/><circle cx="561" cy="745" r="1.500" fill="#50b050"/><circle cx="566" cy="744" r="1.500" fill="#e8c030"/><circle cx="559" cy="753" r="1.500" fill="#4060d0"/><path d="M565 760l6-16" stroke="#d98a30" stroke-width="1.500"/><path d="M570 746l2-7 3 2z" fill="#b89a70"/>
<!-- mountains -->
<circle cx="618" cy="741" r="3" fill="#f7a800"/><path d="M602 756l7-11 5 6 3-3 6 8h-7l-3-4-3 4z" fill="#7a5bd8"/><path d="M610 756l4-6 6-1 4 7z" fill="#5b46c4"/>
<!-- underlines -->
<g fill="#76b9ed"><rect x="55" y="766" width="40" height="2"/><rect x="300" y="766" width="40" height="2"/><rect x="349" y="766" width="40" height="2"/><rect x="443" y="766" width="48" height="2"/><rect x="545" y="766" width="31" height="2"/><rect x="594" y="766" width="40" height="2"/></g><rect x="576" y="766" width="9" height="2" fill="#5c8fb8"/>
<!-- tray -->
<ellipse cx="966" cy="741" rx="9" ry="3.500" fill="#f28a1c"/><ellipse cx="968" cy="745" rx="9" ry="3.500" fill="#e77f12"/><ellipse cx="965" cy="749" rx="9" ry="3.500" fill="#f6a02d"/><rect x="963" y="752" width="5" height="3" fill="#e77f12"/><path d="M962 759l4-3 4 3" fill="none" stroke="#4cae4c" stroke-width="2"/>
<text x="986" y="753" style="font-size:13.500px;fill:#dcdcdc" textLength="53">JPY/USD</text>
<text x="1048" y="753" style="font-size:13.500px;fill:#17a517" textLength="46">+0.24%</text>
<path d="M1119 752l6-6 6 6" fill="none" stroke="#eee" stroke-width="1.300"/>
<path d="M1141 753c-1-4 2-5 4-5 1-3 6-4 8-1 3 0 5 2 4 6z" fill="#e8e8e8"/>
<path d="M1166 746h3l4-3v12l-4-3h-3z" fill="none" stroke="#eee"/><path d="M1175 746c1.500 2 1.500 4 0 6M1178 744c2.500 3 2.500 7 0 10M1180.500 742.500c3.500 4 3.500 9 0 13" fill="none" stroke="#eee"/>
<path d="M1194 752c-2 3 1 6 3 3l5-10c2-3 5-1 4 1l-6 11M1199 752l6 3 3-3" fill="none" stroke="#eee" stroke-width="1.200"/>
<rect x="1221.500" y="741.500" width="22" height="12" rx="1" fill="none" stroke="#eee"/><path d="M1224 744.500h17M1224 747h17M1227 750.500h11" stroke="#eee" stroke-dasharray="1.500 1"/>
<text x="1257" y="744" style="font-size:12px;fill:#eee" textLength="48">12:45 PM</text>
<text x="1258" y="761" style="font-size:12px;fill:#eee" textLength="46">4/1/2025</text>
<path d="M1325.500 740.500h16v12h-7l-2 3-2-3h-5z" fill="none" stroke="#eee"/>
</svg>
</body></html>
